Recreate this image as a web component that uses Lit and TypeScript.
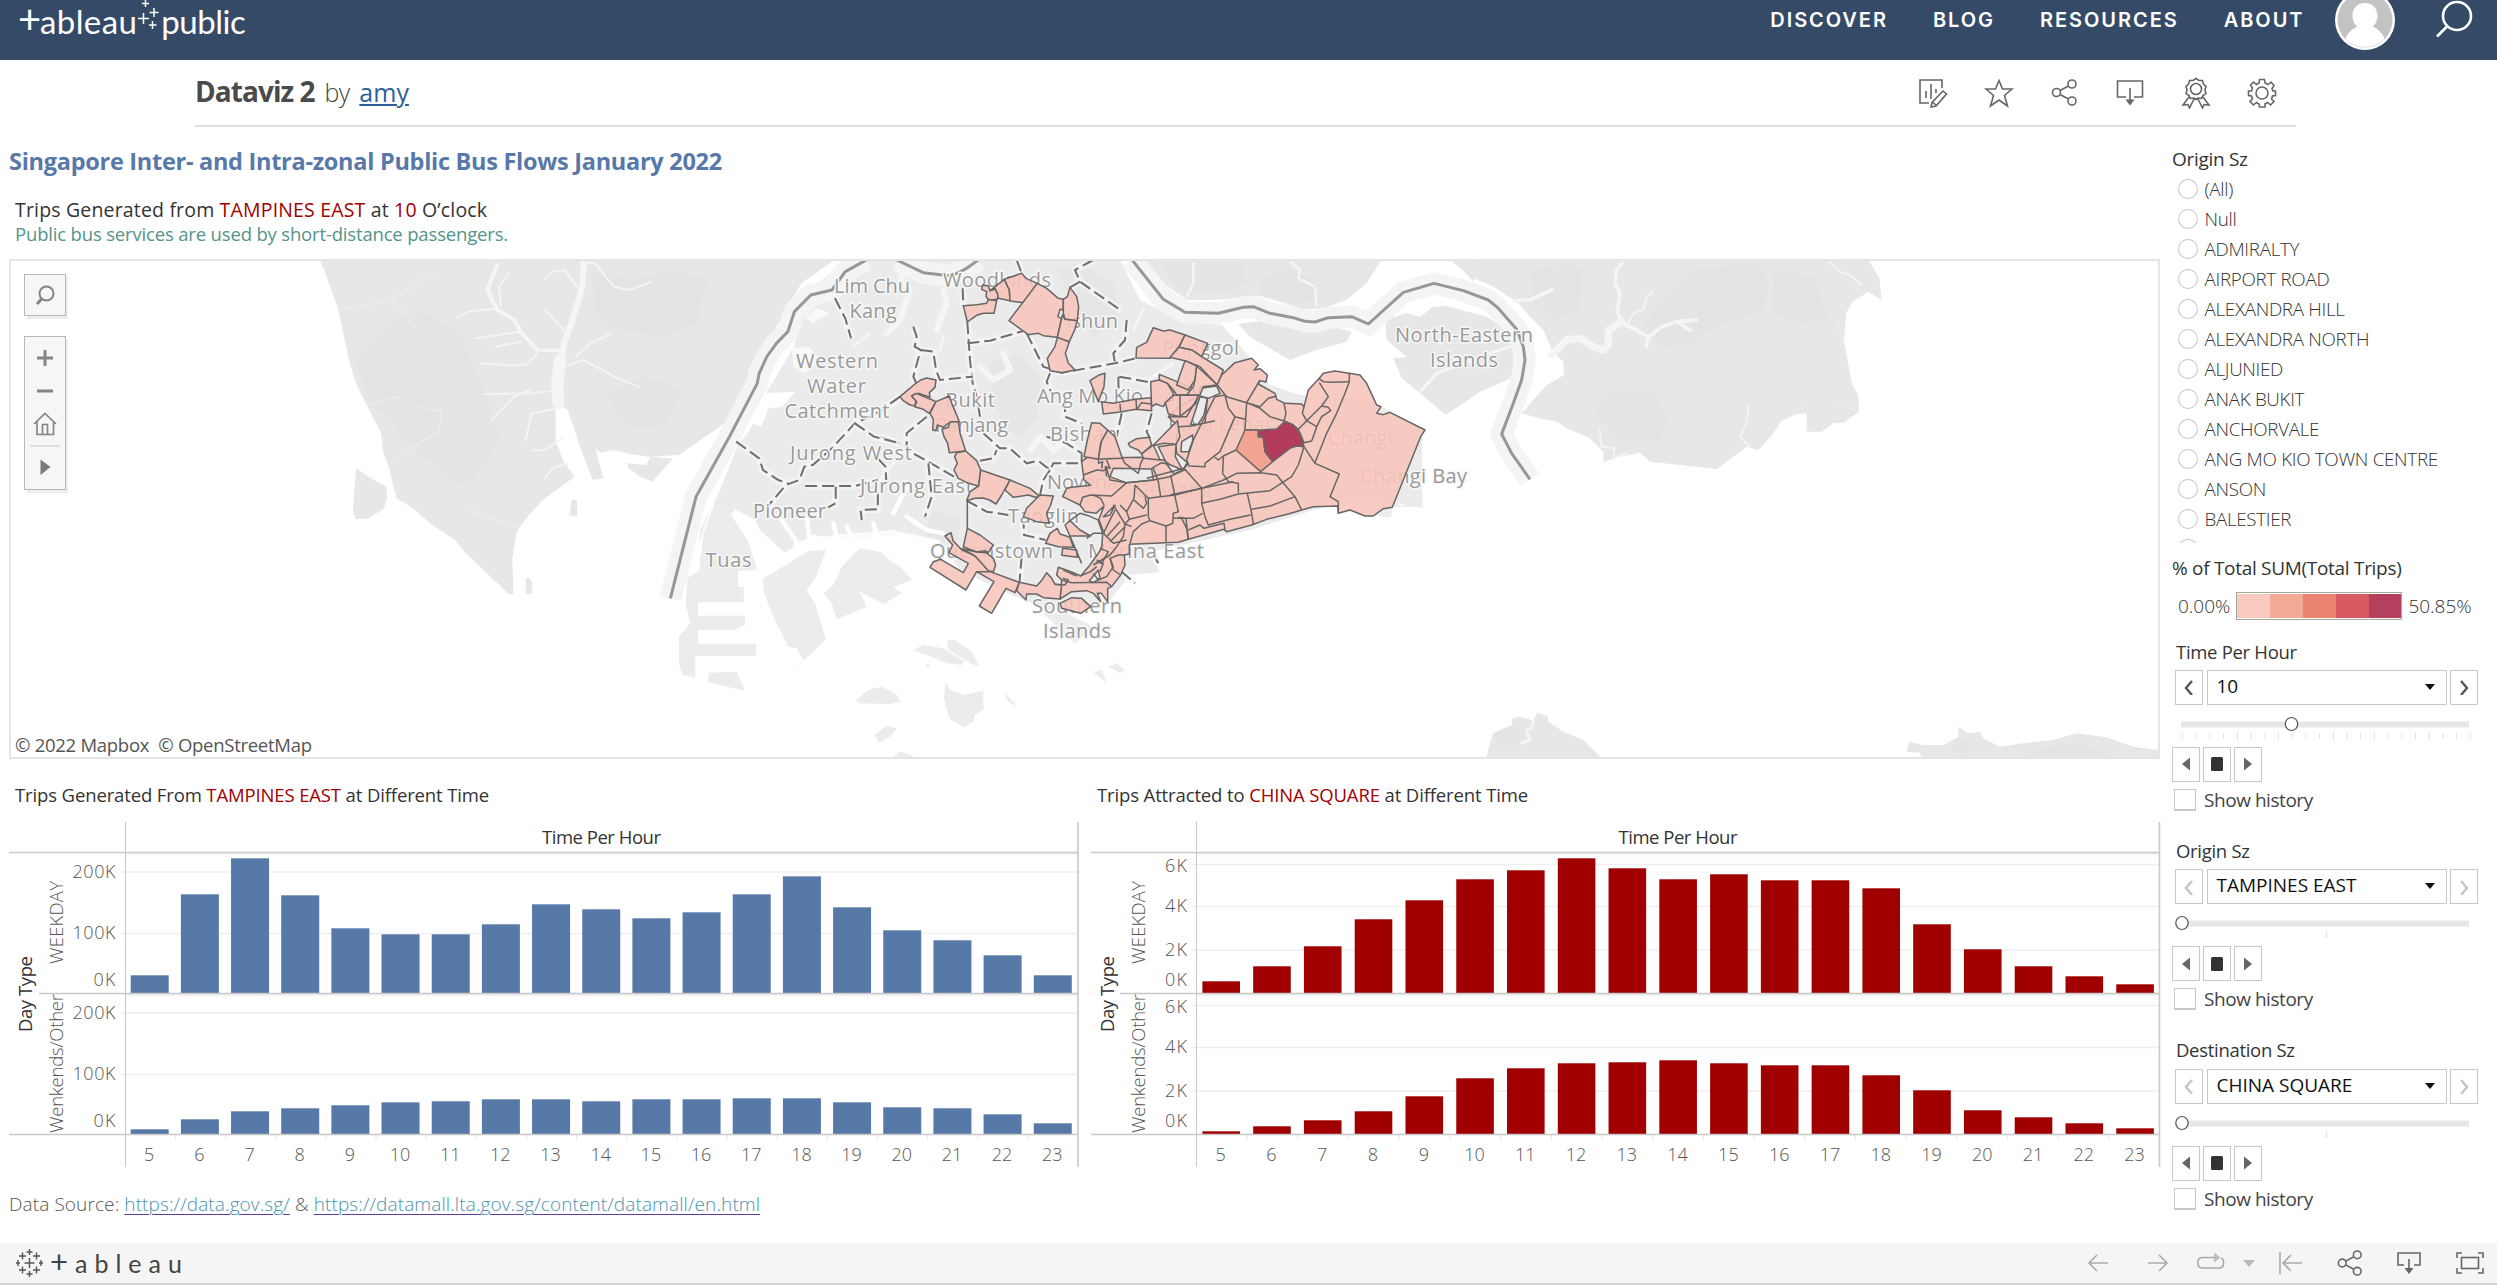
import { LitElement, html, svg, css } from "lit";
import { customElement, property } from "lit/decorators.js";

/* ---------- chart data ---------- */
interface ChartSpec {
  x0: number; axis: number; right: number; first: number; pitch: number; bar: number;
  color: string; rule: number; labelX: number; title: number;
  rows: number[][];
  marks: [string, number, number][];
}

const flows: ChartSpec = {
  x0: 9, axis: 125.5, right: 1078, first: 130.7, pitch: 50.17, bar: 38,
  color: "#5779a8", rule: 39, labelX: 115.5, title: 542,
  rows: [
    [18, 99, 135, 98, 65, 59, 59, 69, 89, 84, 75, 81, 99, 117, 86, 63, 53, 38, 18],
    [5, 15, 23, 26, 29, 32, 33, 35, 35, 33, 35, 35, 36, 36, 32, 27, 26, 20, 11],
  ],
  marks: [["200K", 872, 878], ["100K", 933.5, 939], ["0K", 0, 985.5]],
};

const attracted: ChartSpec = {
  x0: 1091, axis: 1196.5, right: 2159.5, first: 1202.4, pitch: 50.77, bar: 37.6,
  color: "#a00000", rule: 1120, labelX: 1187, title: 1618.5,
  rows: [
    [12, 27, 47, 74, 93, 114, 123, 135, 125, 114, 119, 113, 113, 105, 69, 44, 27, 17, 9],
    [3, 8, 14, 23, 38, 56, 66, 71, 72, 74, 71, 69, 69, 59, 44, 24, 17, 11, 6],
  ],
  marks: [["6K", 864.5, 872], ["4K", 906.5, 912], ["2K", 950, 956], ["0K", 0, 985.5]],
};

const hours = Array.from({ length: 19 }, (_, i) => i + 5);

/* ---------- map data ---------- */
const west = "translate(300 250) scale(.38265 .33333)";
const mid = "translate(880 250) scale(.33333)";
const east = "translate(1180 250) scale(.33333)";
const farEast = "translate(1480 250) scale(.33333)";
const south = "translate(660 480) scale(.33333)";

const places: [string, number, number, number][] = [
  ["Lim Chu", 834, 293, 76], ["Kang", 849.5, 318, 47], ["Western", 796, 368, 82], ["Water", 807, 393, 59],
  ["Catchment", 784.5, 418, 105], ["Jurong West", 790, 460, 122], ["Jurong East", 860, 492.5, 113],
  ["Pioneer", 753, 518, 73], ["Tuas", 705.6, 567, 46], ["Woodlands", 943, 287, 108], ["Yishun", 1055, 328, 63],
  ["Punggol", 1162, 355, 77], ["Bukit", 945, 406.7, 50], ["Panjang", 935, 432, 73], ["Ang Mo Kio", 1037, 403, 106],
  ["Bishan", 1050, 440.7, 67], ["Novena", 1047, 489, 71], ["Geylang", 1135, 496.7, 77], ["Tanglin", 1008, 522.7, 71],
  ["Queenstown", 930, 558, 123], ["Marina East", 1088, 558, 116], ["Southern", 1032, 612.7, 90], ["Islands", 1043, 637.7, 68],
  ["Paya Lebar", 1168, 431, 105], ["Changi", 1327.7, 445, 65], ["Changi Bay", 1360, 482.7, 107],
  ["North-Eastern", 1395, 342, 138], ["Islands", 1430, 366.7, 68],
];

const zonesMid = [
  "M250 167L290 164 320 160 325 147 350 152 342 190 310 190 290 196 262 216Z",
  "M308 105L325 108 330 122 345 118 355 130 352 148 328 150 318 140 320 125 305 118Z",
  "M330 122L373 88 388 120 390 152 355 145 352 130 345 115Z",
  "M373 88L425 70 438 85 472 100 430 158 390 153 388 120Z",
  "M472 100L500 115 535 145 550 148 550 180 540 178 534 200 545 205 532 262 490 257 475 250 445 254 430 243 387 212Z",
  "M550 148L562 140 570 112 590 140 596 170 592 212 555 208 550 190Z",
  "M547 195L555 208 592 212 584 240 568 275 532 262Z",
  "M532 262L568 276 556 310 565 340 585 360 545 368 510 362 502 325 525 290Z",
  "M60 440L105 402 122 390 140 384 168 390 165 412 148 428 150 442 115 430 95 438 108 452 105 468 90 465 70 452Z",
  "M95 438L108 430 150 447 168 455 148 490 130 478 104 470 110 455Z",
  "M168 455L208 438 215 460 228 490 238 515 205 520 190 532 172 525 168 542 158 540 160 508 150 490Z",
  "M186 538L205 532 210 515 235 515 240 550 257 603 235 605 208 608 203 580 192 560Z",
  "M230 608L257 603 290 632 302 660 296 708 265 700 235 685 222 660 232 640 224 620Z",
  "M302 660L390 690 365 735 348 762 328 750 310 744 285 745 260 752 270 725 296 708Z",
  "M390 690L450 715 480 740 465 742 445 735 400 742 375 720Z",
  "M480 735L520 738 512 765 500 790 508 820 470 815 430 800 440 775 470 745Z",
  "M262 835L300 855 340 885 325 908 315 902 290 906 250 890Z",
  "M195 858L213 848 219 872 246 900 290 920 328 965 290 965 258 1020 150 952 160 935 182 928 250 968 265 940 207 908 218 885Z",
  "M246 896L290 906 318 908 340 925 347 945 340 965 325 962 285 918Z",
  "M290 965L330 965 418 997 405 1028 378 1015 335 1090 298 1068 342 995Z",
  "M418 997L470 1008 486 990 500 968 515 985 525 1003 545 1005 540 1047 490 1043 470 1032 440 1032 438 1050 410 1022Z",
  "M540 1060L575 1043 605 1045 632 1070 602 1090 545 1075Z",
  "M497 880L510 850 532 835 540 852 570 862 580 892 535 890Z",
  "M548 895L590 900 592 922 545 916Z",
  "M820 233L850 243 870 240 915 255 897 290 870 325 768 324 770 292 800 277Z",
  "M838 373L940 415 945 435 890 435 880 420 862 400 838 390Z",
  "M812 395L838 390 862 400 880 430 878 450 856 458 850 470 828 462 815 470Z",
  "M813 443L815 482 768 478 720 486 670 492 665 455 700 460 765 448Z",
  "M630 392L655 376 675 370 672 410 655 455 645 430Z",
  "M856 458L880 436 955 435 948 460 900 500 865 492Z",
  "M892 512L900 560 888 583 850 580 818 588Z",
  "M745 580L770 566 808 562 815 585 785 612 775 600 750 590Z",
  "M785 612L820 585 840 630 790 625Z",
  "M635 518L660 520 683 540 662 580 655 628 612 620 622 570Z",
  "M683 540L705 560 727 625 655 628 664 575Z",
  "M555 825L570 812 600 840 632 858 570 858Z",
];

const zonesEast = [
  "M15 255L83 280 65 320 35 300 -3 292Z",
  "M-30 322L-3 292 35 300 65 320 130 360 112 405 60 350 15 332Z",
  "M15 332L50 348 45 390 25 420 -10 405 -2 380Z",
  "M50 348L112 405 70 410 60 435 20 435 40 410 45 390Z",
];

const mainland =
  "M605 635L625 620 655 625 780 622 850 630 872 645 908 660 925 640 890 610 888 583 895 530 865 500 890 475 955 437 960 412 1010 405" +
  "L1025 375 1065 338 1115 325 1135 345 1122 360 1140 356 1162 375 1158 396 1140 392 1135 402 1185 430 1190 448 1215 460 1265 462 1272 470" +
  "L1285 420 1318 385 1330 370 1365 363 1440 375 1460 400 1490 465 1503 470 1490 490 1510 494 1530 487 1635 540 1622 560 1537 772 1510 776 1480 798" +
  "L1455 798 1410 780 1375 790 1373 768 1300 770 1265 780 1225 792 1160 808 1115 825 1040 845 1032 838 990 850 925 868 895 877 748 883 748 912 733 915" +
  "L735 945 722 975 695 1010 683 1015 683 1055 664 1030 652 1030 662 1055 640 1030 620 1022 575 1025 540 1047 545 990 530 975 535 952 575 966 602 978" +
  "L630 945 665 895 668 850 655 812 672 768 648 790 615 785 600 765 548 740 560 715 575 712 632 706 612 690Z" +
  "M835 590L888 583 886 620 908 660 882 672 862 645Z M700 655L815 657 820 690 770 695 738 698 690 680Z" +
  "M960 440L982 445 972 495 955 522 932 524Z M962 415L1010 408 1020 430 985 445 960 438Z M905 575L938 555 938 572 926 605 903 605Z" +
  "M670 800L705 766 690 795Z M628 992L655 960 660 985 640 998Z";

const innerMid = [
  "M610 675L650 660 670 662 680 655 690 690 740 698 820 690 870 680 918 658",
  "M655 625L656 640 668 635 665 655M680 630L690 655 676 650 680 680",
  "M727 625L735 640 775 670 782 640 790 625M815 655L845 638 872 645",
  "M820 655L835 695 842 740M872 675L885 740 895 785 880 790 878 820 858 828",
  "M740 698L695 738 632 735 608 742 600 765M765 705L805 745 805 800 810 812 858 828",
  "M805 745L885 735 965 715 1060 695M765 705L762 745 740 785 720 765",
  "M762 750L790 775 800 760 795 740M740 785L748 808 800 795",
  "M810 812L785 822 760 845 750 880M858 828L858 878M748 808L735 822 755 830",
  "M640 735L662 745 672 765M700 765L735 822 730 860 710 890 690 915 640 945M705 780L670 850 700 880 740 870",
  "M680 860L720 815M690 875L735 830M660 895L685 905 665 940 650 935M735 915L715 915 690 925 700 950 680 980 655 990 640 970",
  "M545 990L575 998 680 997 695 1010M600 978L632 965 650 950M650 930L670 940 660 965M722 975L700 960 690 925",
  "M570 812L600 790 625 797 658 812 672 850 640 850 620 865M570 858L590 905 605 940M548 985L565 990 555 1005 525 1003",
  "M895 802L915 805M918 805L925 868M768 448L770 478 785 458 813 462M720 462L722 486M900 435L900 500",
  "M865 500L920 500 955 440M895 530L935 528 1005 512M550 960L590 978",
];

const innerEast = [
  "M112 405L140 440 200 458 240 390M200 458L240 470 265 445 290 438M200 458L240 475 270 500 312 513",
  "M200 458L195 540 235 540M312 460L318 490 312 513 340 525 355 538 380 512 367 490 372 470",
  "M135 435L145 475 165 500 195 508M165 500L120 605 75 640 75 650 27 648 20 630 40 570 70 510 105 440 135 435",
  "M82 445L75 520M168 600L130 618 115 630 105 622M20 640L12 655 65 715",
  "M372 590L355 645 335 680 308 697 290 675 242 668 170 670 130 690 65 715 -30 735",
  "M130 618L128 670 145 695 175 700 175 728M65 760L120 748 175 732 270 722 308 697 345 740 365 780",
  "M202 730L215 790 220 822M215 778L270 768 345 740M65 715L65 760 75 800 85 825 150 808 212 795",
  "M-20 805L40 805 68 790M25 840L60 825 72 835 132 820 135 840M5 805L20 835 25 868",
  "M372 590L405 640 478 672 450 740 475 755 475 790M405 638L440 550 470 490 495 430 508 395 508 370",
  "M416 385L430 395 460 397 508 395M418 398L445 440 425 468 380 512 410 530 425 500 452 482 445 472 425 468",
  "M355 538L372 578 395 573 405 545 410 530M-100 685L12 655",
];

const dashedMid = [
  "M410 30L425 70M248 115L250 167M262 216L270 330 278 400 290 440 300 500M262 280L330 272 430 243",
  "M100 230L110 260 104 290 122 300 108 350 100 380 110 402M122 300L160 305 168 360 180 390 278 380",
  "M640 30L585 60 600 95 725 183M740 210L735 270 700 310 705 340M440 250L490 350 545 368 705 340 770 324M600 95L570 112",
  "M510 370L500 395 515 430M555 450L555 500 605 520M310 550L360 595 390 595 440 640 475 632 510 660 520 640 600 640",
  "M510 660L490 690 480 735M300 632L340 625 350 600M0 490L60 440M140 500L80 550 80 600 145 635 222 680",
  "M145 640L155 740 135 800M260 752L320 785 385 795M430 800L432 855 497 870M425 920L418 1000",
  "M718 380L800 395 812 395M715 380L716 440M725 490L710 560M815 490L800 545 810 565M605 600L605 635",
  "M725 965L765 1000M820 915L835 940M500 560L560 580 605 610M0 560L60 580",
];

const dashedWest = [
  "M1398 145L1425 205 1440 265M1568 440L1500 495 1450 520 1390 595 1340 645 1318 650 1305 690 1270 705 1225 765",
  "M1140 575L1200 625 1210 660 1250 690 1275 700M1320 708L1450 708 1510 690M1400 710L1400 760 1380 772",
  "M1450 520L1500 560 1568 580M1510 625L1530 650 1532 690M1510 730L1510 778 1465 780 1468 810",
];

const borderLine = [
  [west, "M968 1045L1035 740 1120 565 1195 400 1200 370 1220 320 1245 280 1275 245 1292 185 1335 135 1390 120 1425 65 1480 30"],
  [mid, "M50 30L130 68 215 78 260 55 295 30"],
  [east, "M-145 28L-50 148 15 187 115 190 190 172 220 170 270 190 340 203 375 214 405 216 445 203 515 200 565 222 670 127 762 100 850 122 925 150 952 172 1010 238 1030 290 1035 330 1025 390 1000 460 965 552 995 610 1050 688"],
];

@customElement("flow-map")
class FlowMap extends LitElement {
  static styles = css`
    :host { display: block; width: 2151px; height: 500px; }
    svg { display: block; }
    .land { fill: #e7e7e7; }
    .isle { fill: #ececec; }
    .city { fill: #ebebeb; }
    .shade { fill: #e2e2e2; opacity: 0.5; }
    .water { fill: none; stroke: #f5f5f5; stroke-linejoin: round; stroke-linecap: round; }
    .creek { stroke-width: 5; }
    .road { stroke: #efefef; stroke-width: 3; }
    .sea { fill: #fff; }
    .strait { stroke: #fdfdfd; }
    .halo { fill: none; stroke: #f4f4f4; stroke-width: 22; vector-effect: non-scaling-stroke; }
    .line { fill: none; stroke: #979797; stroke-width: 3; vector-effect: non-scaling-stroke; stroke-linejoin: round; }
    .glow { fill: none; stroke: #f6f6f6; stroke-width: 7; vector-effect: non-scaling-stroke; opacity: 0.8; }
    .dash { fill: none; stroke: #6e6e6e; stroke-width: 2; stroke-dasharray: 12 5; vector-effect: non-scaling-stroke; }
    .zone { fill: #f8c5bb; fill-opacity: 0.88; stroke: #666; stroke-width: 1.5; vector-effect: non-scaling-stroke; stroke-linejoin: round; }
    .inner { fill: none; stroke: #666; stroke-width: 1.5; vector-effect: non-scaling-stroke; stroke-linejoin: round; }
    .warm { fill: #f2a491; fill-opacity: 1; }
    .hot { fill: #b43c5b; fill-opacity: 1; }
    .place { font: 20px "Open Sans", "Noto Sans", sans-serif; fill: #999; stroke: #f7f7f7; stroke-width: 3; paint-order: stroke; stroke-linejoin: round; }
    .credit { font: 18.5px "Open Sans", "Noto Sans", sans-serif; fill: #555; }
    .frame { fill: none; stroke: #e5e5e5; stroke-width: 2; }
    .panel { fill: #f6f6f6; stroke: #b8b8b8; stroke-width: 1; }
    .drop { fill: #ededed; }
    .glyph { fill: none; stroke: #858585; stroke-width: 2; }
    .thick { stroke-width: 3; }
    .fine { stroke-width: 1.7; }
    .solid { fill: #7a7a7a; }
  `;

  render() {
    return html`<svg width="2151" height="500" viewBox="9 259 2151 500">
      <rect class="sea" x="9" y="259" width="2151" height="500" />
      <g transform=${west}>
        <path class="land" d="M52 28L70 80 100 180 130 340 150 410 212 550 218 610 232 650 252 745 290 770 340 820 405 870 430 905 545 1032 558 1032 555 930 565 850 578 825 610 780 640 745 718 680 690 635 668 575 668 460 700 480 735 600 765 690 793 685 772 595 785 608 820 600 860 612 915 620 990 615 1110 520 1140 450 1200 320 1240 240 1310 100 1400 28Z" />
        <path class="shade" d="M150 330L260 200 330 190 420 260 480 420 520 560 440 720 300 600 240 520 170 440ZM760 60L860 90 980 60 1060 90 1040 220 940 260 820 230 770 180ZM800 430L900 380 1000 420 960 520 860 540Z" />
        <path class="land" d="M147 655L190 688 225 710 228 740 220 775 180 805 145 808 138 780ZM855 640L905 645 915 620 975 626 920 695 890 680 858 655ZM710 748L724 750 724 800 704 794ZM590 985L600 983 607 997 605 1032 590 1032Z" />
        <path class="water" stroke-width="16" d="M742 35L738 110 715 200 690 280 682 330 680 370" />
        <path class="water" stroke-width="32" d="M680 330L672 400 675 460" />
        <path class="water" stroke-width="11" d="M690 302L620 300 580 250 560 210 515 180 490 120 515 45" />
        <path class="water creek" d="M742 38L770 40 820 110 860 120 920 95M725 110L690 60 660 65 640 85M515 175L440 185 410 205M525 165L520 110 545 70M575 245L460 265M580 275L510 290M620 310L590 345 540 345 475 340M690 240L640 180M700 345L740 330 830 385 885 410M720 320L760 280 815 250M680 420L600 430 480 432M600 420L560 440 500 510M675 475L605 490 590 570M685 565L640 600 605 602M700 640L660 655 640 685" />
        <path class="water road" d="M105 180L240 150 350 65M240 150L305 235M175 465L260 440M310 468L370 485 365 540 240 635M440 780L570 832" />
      </g>
      <g transform=${farEast}>
        <path class="land" d="M-90 28L-30 80 40 110 110 155 150 200 190 240 215 300 250 335 252 375 200 405 160 450 125 490 190 508 230 515 260 535 330 565 370 605 370 635 420 620 480 608 510 635 600 645 710 658 760 620 800 590 835 600 880 550 905 512 950 492 980 490 980 545 1025 545 1060 520 1090 518 1137 485 1135 435 1115 400 1092 270 1098 190 1118 155 1165 125 1205 150 1198 85 1165 28Z" />
        <path class="shade" d="M340 480L400 420 520 430 560 500 540 570 420 570ZM490 230L560 130 640 60 830 40 870 100 850 180 700 230 640 280 560 290ZM150 60L250 40 310 60 300 180 220 210 160 150ZM880 60L1000 80 1040 200 980 220 880 190Z" />
        <path class="water" stroke-width="22" d="M215 315L260 270 300 265 340 290 370 300 385 285 385 240 425 215" />
        <path class="water" stroke-width="11" d="M430 222L470 240 505 262 545 230 590 215 650 210M425 215L412 185 420 130 405 100 410 60 425 40M590 215L630 240M505 262L500 290M105 152L150 150 215 120" />
        <path class="water creek" d="M440 225L460 190 490 180 500 140 520 125M358 535L365 590 403 595 403 625 440 608M805 465L800 515 780 560 810 590M1045 35L1080 65 1110 75 1145 105" />
        <path class="water road" d="M1072 210L1092 280M1072 458L1130 482M960 460L972 495" />
        <path class="land" d="M18 1525L30 1480 40 1450 95 1425 95 1405 120 1400 160 1412 172 1388 203 1398 205 1415 250 1445 310 1470 365 1525ZM1325 1525L1320 1508 1280 1505 1288 1475 1330 1485 1390 1485 1435 1460 1435 1430 1465 1450 1500 1445 1510 1465 1560 1490 1640 1478 1720 1470 1790 1450 1880 1462 1960 1490 2040 1500 2040 1525Z" />
        <path class="shade" d="M40 1450L95 1430 130 1460 100 1488 60 1478ZM1410 1500L1440 1460 1480 1490 1450 1510ZM1640 1520L1700 1490 1800 1480 1900 1525Z" />
        <path class="water" stroke-width="8" d="M160 1415L155 1435 138 1440 150 1470 125 1480" />
      </g>
      <g transform=${east}>
        <path class="land" d="M-140 28L-50 100 20 150 100 150 240 138 370 178 430 175 500 150 560 100 605 28ZM805 28L900 28 880 95 850 60Z" />
        <path class="shade" d="M240 90L320 60 400 90 410 140 360 165 240 130ZM-60 40L180 40 200 100 120 130 0 120Z" />
        <path class="water" stroke-width="7" d="M330 35L360 60 355 85 405 110 410 165M40 40L40 100 20 140" />
        <path class="land" d="M175 222L260 210 330 225 380 240 450 228 515 245 500 275 410 300 330 330 260 290 210 260Z" />
        <path class="land" d="M615 210L680 190 720 200 760 170 800 168 920 200 1000 250 1000 380 970 395 900 425 850 460 797 495 720 430 665 385 640 325 680 320 620 270Z" />
        <path class="water" stroke-width="9" d="M720 425L770 370 870 330 990 290" />
        <path class="isle" d="M640 740L665 770 680 765 680 732 728 730 728 770 640 772 632 802 600 800 570 790Z" />
      </g>
      <path class="city" d="M845 259L812 290 800 305 795 345 780 370 765 395 750 430 738 445 720 490 700 530 699 560 705 570 755 570 750 545 730 513 740 512 785 553 812 535 850 540 905 535 940 542 960 570 1000 590 1035 605 1060 612 1110 600 1130 575 1160 572 1150 552 1250 530 1330 505 1380 500 1422 508 1422 430 1370 400 1300 395 1270 385 1240 345 1222 325 1180 320 1140 300 1120 259Z" />
      <g transform=${mid}>
        <path class="shade" d="M330 340L420 310 480 380 470 500 430 560 380 540 340 460ZM530 60L600 40 700 100 720 200 640 260 600 210ZM150 780L240 800 230 880 140 860Z" />
        <path class="water" stroke-width="18" d="M300 350L340 390 390 360 370 310M450 600L480 560 520 600 560 570M20 250L60 210 90 120 60 80M170 240L200 160 190 120" />
        <path class="water" stroke-width="8" d="M790 400L880 340M760 240L790 180M-30 250L-80 290M-10 700L40 640 60 600M180 300L190 260" />
      </g>
      <g transform=${west}>
        <path class="isle" d="M1078 755L1050 860 1045 960 1012 985 1008 1060 1020 1120 990 1160 990 1240 1000 1275 1033 1283 1033 1217 1192 1217 1192 1181 1040 1181 1040 1140 1135 1140 1163 1125 1163 1097 1040 1097 1040 1057 1160 1057 1160 1012 1145 1010 1145 962 1195 960 1170 870 1120 790Z" />
        <path class="isle" d="M1070 1268L1142 1265 1163 1322 1065 1297Z" />
        <path class="sea" d="M1078 755L1084 760 1055 850 1050 900 1044 940 1040 890ZM1210 430L1295 425 1260 470 1225 475 1205 530 1180 520ZM1130 775L1190 810 1210 860 1265 910 1350 850 1340 900 1240 985 1200 960 1165 860Z" />
        <path class="sea" d="M1285 295L1330 290 1360 330 1320 370 1290 350ZM1320 200L1350 175 1385 190 1340 220Z" opacity=".7" />
      </g>
      <g transform=${south}>
        <path class="isle" d="M310 295L345 275 440 215 500 205 468 290 440 330 465 370 480 420 498 478 405 567 430 540 410 505 385 500 345 420 320 360 310 330ZM545 260L600 205 660 215 690 240 720 260 757 300 700 320 725 340 670 372 600 335 620 380 530 418 515 370 490 340 520 315Z" />
        <path class="isle" d="M758 510L790 495 850 505 915 545 905 555 860 550 800 525ZM862 480L885 480 935 515 958 560 930 550 865 510ZM588 660L630 628 665 620 710 645 723 665 690 672 600 670ZM857 605L870 630 910 645 970 632 970 688 945 705 940 725 910 743 868 715 852 655ZM1030 635L1075 680 1045 665ZM645 765L680 737 710 745 690 770 655 788ZM700 828L720 815 762 828 740 836ZM1150 400L1220 400 1300 440 1245 490 1200 450ZM1300 575L1325 570 1340 610ZM1345 560L1370 550 1395 570 1380 580ZM797 550L812 555 800 562Z" />
        <path class="water strait" stroke-width="14" d="M365 120L420 200M440 110L450 190M520 130L530 170M640 130L650 170M700 100L740 20M560 140L580 180M740 110L800 150 850 160" />
        <path class="sea" d="M400 185L520 165 700 150 840 180 840 200 600 205 400 215Z" opacity=".8" />
      </g>
      ${borderLine.map(([t, d]) => svg`<path class="halo" transform=${t} d=${d} />`)}
      ${dashedMid.map((d) => svg`<g transform=${mid}><path class="glow" d=${d} /><path class="dash" d=${d} /></g>`)}
      ${dashedWest.map((d) => svg`<g transform=${west}><path class="glow" d=${d} /><path class="dash" d=${d} /></g>`)}
      ${borderLine.map(([t, d]) => svg`<path class="line" transform=${t} d=${d} />`)}
      ${places.map(([name, x, y, w]) => svg`<text class="place" x=${x} y=${y} textLength=${w}>${name}</text>`)}
      <g transform=${mid}>
        <path class="zone" fill-rule="evenodd" d=${mainland} />
        ${zonesMid.map((d) => svg`<path class="zone" d=${d} />`)}
        ${innerMid.map((d) => svg`<path class="inner" d=${d} />`)}
        <path class="inner" d="M262 752V835" />
      </g>
      <g transform=${east}>
        ${zonesEast.map((d) => svg`<path class="zone" d=${d} />`)}
        ${innerEast.map((d) => svg`<path class="inner" d=${d} />`)}
        <path class="zone warm" d="M195 540L235 540 235 560 250 562 255 605 278 635 242 665 168 600Z" />
        <path class="zone hot" d="M235 541L290 537 315 514 340 525 360 550 372 590 350 588 330 595 278 635 255 605 250 562 235 560Z" />
      </g>
      <text class="credit" x="15" y="752" textLength="297" xml:space="preserve">© 2022 Mapbox  © OpenStreetMap</text>
      <rect class="frame" x="10" y="260" width="2149" height="498" />
      <rect class="drop" x="27" y="277" width="41" height="42" />
      <rect class="panel" x="24.5" y="274.5" width="41" height="41" />
      <circle class="glyph" cx="46.5" cy="293.5" r="7" />
      <path class="glyph thick" d="M41.5 299L37 304" />
      <rect class="drop" x="27" y="339" width="41" height="154" />
      <rect class="panel" x="24.5" y="336.5" width="41" height="153" />
      <path class="glyph thick" d="M37 358H53M45 350V366M37 391H53" />
      <path class="glyph fine" d="M34 424L45 413.5 56 424M37 421.5V434.5H53.5V421.5M42.5 434V424.5H47.5V434" />
      <path d="M30 446H60" stroke="#e0e0e0" stroke-width="2" />
      <path class="solid" d="M40.5 459.5L50.5 467 40.5 475Z" />
    </svg>`;
  }
}

@customElement("hour-chart")
class HourChart extends LitElement {
  @property({ attribute: false }) spec: ChartSpec = flows;

  static styles = css`
    :host { display: block; height: 350px; }
    svg { display: block; }
    text { font: 300 18.5px "Open Sans", "Noto Sans", sans-serif; fill: #555; }
    .head { fill: #333; font-weight: 400; }
    .rule { stroke: #c8c8c8; stroke-width: 1.6; fill: none; }
    .hair { stroke-width: 1; }
    .grid { stroke: #efefef; stroke-width: 1.4; fill: none; }
    .num { font-size: 18px; }
  `;

  render() {
    const c = this.spec;
    const w = c.right - c.x0 + 2;
    const step = (c.right - c.axis) / 19;
    return html`<svg width=${w} height="350" viewBox="${c.x0} 820 ${w} 350">
      ${[0, 1].map((r) => svg`
        ${c.marks.map(([label, gy, ty]) => svg`
          ${gy ? svg`<path class="grid" d="M${c.axis - 5} ${gy + r * 141}H${c.right}" />` : ""}
          <text class="num" x=${c.labelX} y=${ty + r * 141} text-anchor="end" textLength=${label.length === 4 ? 43 : 22}>${label}</text>`)}
        ${c.rows[r].map((h, i) => svg`<rect x=${c.first + i * c.pitch} y=${993.3 + r * 141 - h} width=${c.bar} height=${h} fill=${c.color} />`)}`)}
      <path class="grid" d="M${c.axis} 854H${c.right}M${c.axis} 995H${c.right}" />
      ${hours.slice(1).map((_, i) => svg`<path class="grid" d="M${c.axis + (i + 1) * step} 1135V1141" />`)}
      <path class="rule" d="M${c.x0} 852.5H${c.right}M${c.rule} 993.5H${c.right}M${c.x0} 1134.5H${c.right}M${c.right} 822V1167" />
      <path class="rule hair" d="M${c.axis} 822V1167" />
      <text class="head" x=${c.title} y="844" textLength="119">Time Per Hour</text>
      ${hours.map((h, i) => svg`<text class="num" text-anchor="middle" x=${c.first + c.bar / 2 - 0.5 + i * c.pitch} y="1161">${h}</text>`)}
      <text class="head" transform="translate(${c.x0 + 22.5} 1032) rotate(-90)" textLength="76">Day Type</text>
      <text transform="translate(${c.x0 + 53.5} 964) rotate(-90)" textLength="83">WEEKDAY</text>
      <text transform="translate(${c.x0 + 53.5} 1133) rotate(-90)" textLength="139">Wenkends/Other</text>
    </svg>`;
  }
}

@customElement("page-control")
class PageControl extends LitElement {
  @property() label = "";
  @property() value = "";
  @property({ type: Number }) thumb = 0;
  @property({ type: Number }) ticks = 1;

  static styles = css`
    :host { display: block; height: 199.4px; font: 19px "Open Sans", "Noto Sans", sans-serif; color: #333; }
    .label { padding-left: 4px; line-height: 26px; margin-bottom: 5.4px; font-size: 18.5px; letter-spacing: -0.3px; }
    .pick { display: flex; gap: 3.5px; padding-left: 3px; }
    .btn { box-sizing: border-box; width: 28px; height: 35px; border: 1px solid #c8c8c8; display: grid; place-items: center; }
    .combo { box-sizing: border-box; width: 240px; height: 35px; border: 1px solid #c8c8c8; display: flex; justify-content: space-between; align-items: center; padding: 0 10px 3px 9px; color: #111; }
    svg { display: block; }
    .play { display: flex; gap: 3px; }
    .hist { display: flex; align-items: center; gap: 8px; padding-left: 2px; margin-top: 7px; line-height: 22px; letter-spacing: -0.45px; color: #444; }
    .box { box-sizing: border-box; width: 22px; height: 22px; border: 1px solid #c8c8c8; border-bottom-width: 2px; }
  `;

  render() {
    const active = this.ticks > 1 ? "#555" : "#c4c4c4";
    const marks = this.ticks > 1 ? Array.from({ length: 22 }, (_, i) => 10.5 + i * 13.71) : [154.5];
    return html`
      <div class="label">${this.label}</div>
      <div class="pick">
        <div class="btn"><svg width="12" height="16" viewBox="0 0 12 16"><path d="M9 2L3 9 9 16" fill="none" stroke=${active} stroke-width="2.4" /></svg></div>
        <div class="combo"><span>${this.value}</span><svg width="12" height="8" viewBox="0 0 12 8"><path d="M1 2H11L6 8Z" fill="#111" /></svg></div>
        <div class="btn"><svg width="12" height="16" viewBox="0 0 12 16"><path d="M3 2L9 9 3 16" fill="none" stroke=${active} stroke-width="2.4" /></svg></div>
      </div>
      <svg width="310" height="42" viewBox="0 0 310 42">
        <rect x="9" y="16.5" width="288" height="6" fill="#e6e6e6" />
        ${marks.map((x) => svg`<path d="M${x} 28V34" stroke="#dedede" />`)}
        <ellipse cx=${this.thumb} cy="19" rx="6.2" ry="6.5" fill="#fff" stroke="#555" stroke-width="1.2" />
      </svg>
      <div class="play">
        <div class="btn"><svg width="10" height="14" viewBox="0 0 10 14"><path d="M9 .5V13.5L1 7Z" fill="#666" /></svg></div>
        <div class="btn"><svg width="12" height="14" viewBox="0 0 12 14"><rect width="12" height="14" rx="1.5" fill="#333" /></svg></div>
        <div class="btn"><svg width="10" height="14" viewBox="0 0 10 14"><path d="M1 .5V13.5L9 7Z" fill="#666" /></svg></div>
      </div>
      <div class="hist"><span class="box"></span><span>Show history</span></div>`;
  }
}

const zones = ["(All)", "Null", "ADMIRALTY", "AIRPORT ROAD", "ALEXANDRA HILL", "ALEXANDRA NORTH", "ALJUNIED", "ANAK BUKIT",
  "ANCHORVALE", "ANG MO KIO TOWN CENTRE", "ANSON", "BALESTIER", "BANGKIT"];

const legend = ["#f8cac0", "#f4a896", "#ea8471", "#d85b63", "#b5405e"];

const shareIcon = svg`<circle cx="6.5" cy="15.5" r="4" /><circle cx="22" cy="7" r="4" /><circle cx="22" cy="24" r="4" /><path d="M10 13.5L18.5 9M10 17.5L18.5 22" />`;

@customElement("app-root")
class AppRoot extends LitElement {
  static styles = css`
    :host { display: block; width: 2497px; height: 1285px; background: #fff; overflow: hidden; font: 19px "Open Sans", "Noto Sans", sans-serif; color: #333; }
    svg { display: block; }
    .top { height: 60px; background: #354a66; display: flex; justify-content: space-between; overflow: hidden; color: #fff; }
    .brand { display: flex; margin-left: 18px; font: 33px/42px Lato, "Open Sans", sans-serif; height: 42px; }
    .cross { display: inline-block; width: 22px; font-size: 40px; line-height: 30px; letter-spacing: 0; }
    .one { letter-spacing: 0.4px; }
    .two { letter-spacing: -0.5px; }
    .nav { display: flex; height: 40px; align-items: center; padding-right: 24px; font: 600 20px/40px Inter, "Open Sans", sans-serif; }
    .nav span { margin-right: 45px; letter-spacing: 1.95px; }
    .avatar { margin: 0 40px 0 -14.5px; }
    .info { margin-left: 195px; width: 2101px; height: 67px; border-bottom: 2px solid #dedede; box-sizing: border-box; display: flex; justify-content: space-between; align-items: center; padding-right: 19px; }
    .name { display: flex; align-items: baseline; gap: 10px; font-size: 25px; font-weight: 300; color: #444; margin-top: -3px; }
    .name b { font-size: 28px; font-weight: 700; color: #4a4a4a; letter-spacing: -0.95px; }
    .by { letter-spacing: -0.8px; }
    .name a { color: #2e5f9a; font-weight: 400; text-decoration: underline; }
    .tools { display: flex; gap: 35.8px; }
    .ic { fill: none; stroke: #666; stroke-width: 1.6; }
    .body { display: flex; height: 1116px; }
    .left { width: 2172px; box-sizing: border-box; padding-left: 9px; }
    .title { margin-top: 19px; font-size: 23.5px; line-height: 31px; font-weight: 700; color: #5778a8; height: 31px; letter-spacing: -0.28px; }
    .sub { margin: 21px 0 0 6px; font-size: 19.5px; line-height: 24.2px; letter-spacing: 0.17px; }
    .note { margin-left: 6px; font-size: 18.5px; line-height: 24px; letter-spacing: -0.17px; color: #549489; }
    .red { color: #a00000; }
    .map { margin-top: 12.8px; }
    .pair { display: flex; gap: 11px; margin-top: 24px; }
    .ct { font-size: 18.5px; line-height: 24px; margin: 0 0 13px 6px; letter-spacing: -0.13px; }
    .src { margin-top: 22px; line-height: 24px; font-weight: 300; color: #555; letter-spacing: 0.11px; }
    .src a { color: #4d93ad; text-decoration: underline; text-decoration-color: #5a3d9c; text-decoration-thickness: 1px; text-underline-offset: 3px; }
    .side { width: 325px; padding-top: 20px; box-sizing: border-box; }
    .cap { line-height: 24px; letter-spacing: -0.3px; }
    .list { height: 369px; margin-top: 3.1px; overflow: hidden; font-weight: 300; font-size: 18.8px; letter-spacing: -0.3px; color: #333; }
    .opt { display: flex; align-items: center; height: 30px; gap: 7px; padding-left: 6px; }
    .dot { box-sizing: border-box; width: 19.5px; height: 20px; border: 1.5px solid #c8c8c8; border-radius: 50%; }
    .cap2 { margin-top: 13px; }
    .legend { display: flex; align-items: center; gap: 6px; margin: 11.5px 0 18px 6px; height: 29px; font-weight: 300; }
    .ramp { box-sizing: border-box; display: flex; width: 166px; height: 28px; border: 1px solid #a9a99a; padding: 1px 0; }
    .ramp i { flex: 1; }
    .s1 { background: #f8cac0; }
    .s2 { background: #f4a896; }
    .s3 { background: #ea8471; }
    .s4 { background: #d85b63; }
    .s5 { background: #b5405e; }
    .foot { height: 42px; box-sizing: border-box; background: #f5f5f5; border-bottom: 2px solid #d2d2d2; display: flex; justify-content: space-between; align-items: center; padding: 0 12.5px 0 15px; }
    .mark { display: flex; align-items: center; gap: 6px; font: 25px/38px Lato, "Open Sans", sans-serif; letter-spacing: 7px; color: #444; }
    .mark .cross { width: 25px; font-size: 31px; }
    .bar { display: flex; }
    .dim { stroke: #aaa; }
    .redo { margin-left: 30px; }
    .loop { margin-left: 22.5px; }
    .more { margin-left: 8.5px; }
    .reset { margin-left: 11px; }
    .share { margin-left: 29.5px; }
    .save { margin-left: 29px; }
    .full { margin-left: 31px; }
  `;

  render() {
    return html`
      <header class="top">
        <div class="brand">
          <span class="one"><span class="cross">+</span>ableau</span>
          <svg width="24" height="40" viewBox="0 0 24 40" fill="none" stroke="#fff" stroke-width="1.5">
            <path d="M8.5 0V7M5 3.5H12M6.5 13V24M1 18.5H12M17 8V17M12.5 12.5H21.5M15.5 21V29M12 25H19.5" />
          </svg>
          <span class="two">public</span>
        </div>
        <nav class="nav">
          <span>DISCOVER</span><span>BLOG</span><span>RESOURCES</span><span>ABOUT</span>
          <svg class="avatar" width="60" height="60" viewBox="0 0 60 60">
            <circle cx="30" cy="30" r="30" fill="#fff" /><circle cx="30" cy="30" r="27.5" fill="#c3c3c3" />
            <path d="M30 13C38 13 43 19 42.5 27 42 32 40 34.5 37.5 36.5 43 39 48 43.5 49.5 49A27.5 27.5 0 0 1 10.5 49C12 43.5 17 39 22.5 36.5 20 34.5 18 32 17.5 27 17 19 22 13 30 13Z" fill="#fff" />
          </svg>
          <svg width="38" height="40" viewBox="0 0 38 40" fill="none" stroke="#fff" stroke-width="2.6">
            <circle cx="22" cy="16" r="14" /><path d="M12 26.5L2 36.5" />
          </svg>
        </nav>
      </header>

      <section class="info">
        <div class="name"><b>Dataviz 2</b><span class="by">by</span><a>amy</a></div>
        <div class="tools">
          <svg class="ic" width="30" height="32" viewBox="0 0 30 32"><path d="M24 11V3H2V26H11M8 21V14M13 22V7M18 16V12M25 14L28.5 17 18 29 13 30 14 25.5ZM15 25.5L18.5 28.5" /></svg>
          <svg class="ic" width="30" height="32" viewBox="0 0 30 32"><path d="M15 3.5L18.5 12H28L20.5 18.5 23.5 29 15 23 6.5 29 9.5 18.5 2 12H11.5Z" /></svg>
          <svg class="ic" width="30" height="32" viewBox="0 0 30 32">${shareIcon}</svg>
          <svg class="ic" width="30" height="32" viewBox="0 0 30 32"><path d="M11 20H2.5V4H27.5V20H19M15 11V24" /><path d="M10.5 22.5H19.5L15 28.5Z" fill="#666" stroke="none" /></svg>
          <svg class="ic" width="30" height="32" viewBox="0 0 30 32"><path d="M15 1.5L18 3.5 21.5 3.5 22.5 7 25 9.5 24 13 25 16.5 22 18.5 20.5 21.5 17 21 15 22.5 13 21 9.5 21.5 8 18.5 5 16.5 6 13 5 9.5 7.5 7 8.5 3.5 12 3.5ZM8 20L2 28 7 27.5 8.5 31 13 22M22 20L28 28 23 27.5 21.5 31 17 22" /><circle cx="15" cy="12" r="5.5" /></svg>
          <svg class="ic" width="30" height="32" viewBox="0 0 30 32"><path d="M12.5 2.5H17.5L18 6 21 7.5 24 5 27 8.5 25 11.5 26 14H28.5V18.5L25.5 19 24.5 22 27 24.5 23.5 28 20.5 25.5 18 27V30H12.5L12 27 9.5 25.5 6.5 28 3 24.5 5.5 21.5 4.5 19 1.5 18.5V14H4.5L5.5 11 3.5 8 6.5 5 9.5 7.5 12 6Z" /><circle cx="15" cy="16" r="6" /></svg>
        </div>
      </section>

      <main class="body">
        <div class="left">
          <div class="title">Singapore Inter- and Intra-zonal Public Bus Flows January 2022</div>
          <div class="sub">Trips Generated from <span class="red">TAMPINES EAST</span> at <span class="red">10</span> O’clock</div>
          <div class="note">Public bus services are used by short-distance passengers.</div>
          <flow-map class="map"></flow-map>
          <div class="pair">
            <div>
              <div class="ct">Trips Generated From <span class="red">TAMPINES EAST</span> at Different Time</div>
              <hour-chart .spec=${flows}></hour-chart>
            </div>
            <div>
              <div class="ct">Trips Attracted to <span class="red">CHINA SQUARE</span> at Different Time</div>
              <hour-chart .spec=${attracted}></hour-chart>
            </div>
          </div>
          <div class="src">Data Source: <a>https://data.gov.sg/</a> &amp; <a>https://datamall.lta.gov.sg/content/datamall/en.html</a></div>
        </div>
        <aside class="side">
          <div class="cap">Origin Sz</div>
          <div class="list">${zones.map((z) => html`<div class="opt"><span class="dot"></span><span>${z}</span></div>`)}</div>
          <div class="cap cap2">% of Total SUM(Total Trips)</div>
          <div class="legend"><span>0.00%</span><div class="ramp">${legend.map((_, i) => html`<i class="s${i + 1}"></i>`)}</div><span>50.85%</span></div>
          <page-control label="Time Per Hour" value="10" thumb="119.5" ticks="22"></page-control>
          <page-control label="Origin Sz" value="TAMPINES EAST" thumb="10"></page-control>
          <page-control label="Destination Sz" value="CHINA SQUARE" thumb="10"></page-control>
        </aside>
      </main>

      <footer class="foot">
        <div class="mark">
          <svg width="29" height="30" viewBox="0 0 29 30" fill="none" stroke="#555" stroke-width="1.4">
            <path d="M14.5 10V20M9.5 15H19.5M14.5 1V7M11.5 4H17.5M14.5 23V29M11.5 26H17.5M7.5 4.5V11.5M4 8H11M21.5 4.5V11.5M18 8H25M7.5 18.5V25.5M4 22H11M21.5 18.5V25.5M18 22H25M3 12V18M1 15H5M26 12V18M24 15H28" />
          </svg>
          <span><span class="cross">+</span>ableau</span>
        </div>
        <div class="bar">
          <svg class="ic dim" width="30" height="30" viewBox="0 0 30 30"><path d="M25 15H6M14 7L6 15 14 23" /></svg>
          <svg class="ic dim redo" width="30" height="30" viewBox="0 0 30 30"><path d="M5 15H24M16 7L24 15 16 23" /></svg>
          <svg class="ic dim loop" width="30" height="30" viewBox="0 0 30 30"><path d="M7 20Q2 20 2 15.5V14Q2 9.5 7 9.5H20M12 20H23Q27.500 20 27.500 15.500V14Q27.500 11 25 10M6 20H13" /><path d="M18 4.5L24.5 9.5 18 14.500Z" fill="#bbb" stroke="none" /></svg>
          <svg class="more" width="30" height="30" viewBox="0 0 30 30"><path d="M9 12H21L15 19Z" fill="#bbb" /></svg>
          <svg class="ic dim reset" width="30" height="30" viewBox="0 0 30 30"><path d="M5 4V26M27 15H8M16 7L8 15 16 23" /></svg>
          <svg class="ic share" width="30" height="30" viewBox="-1 0 31 31">${shareIcon}</svg>
          <svg class="ic save" width="30" height="30" viewBox="0 0 30 30"><path d="M10 17H4V5H26V17H20M15 11V21" /><path d="M10.5 20H19.5L15 26Z" fill="#666" stroke="none" /></svg>
          <svg class="ic full" width="30" height="30" viewBox="0 0 30 30"><rect x="6.5" y="9.500" width="17" height="11" /><path d="M7 5H2V10M23 5H28V10M7 25H2V20M23 25H28V20" /></svg>
        </div>
      </footer>`;
  }
}
